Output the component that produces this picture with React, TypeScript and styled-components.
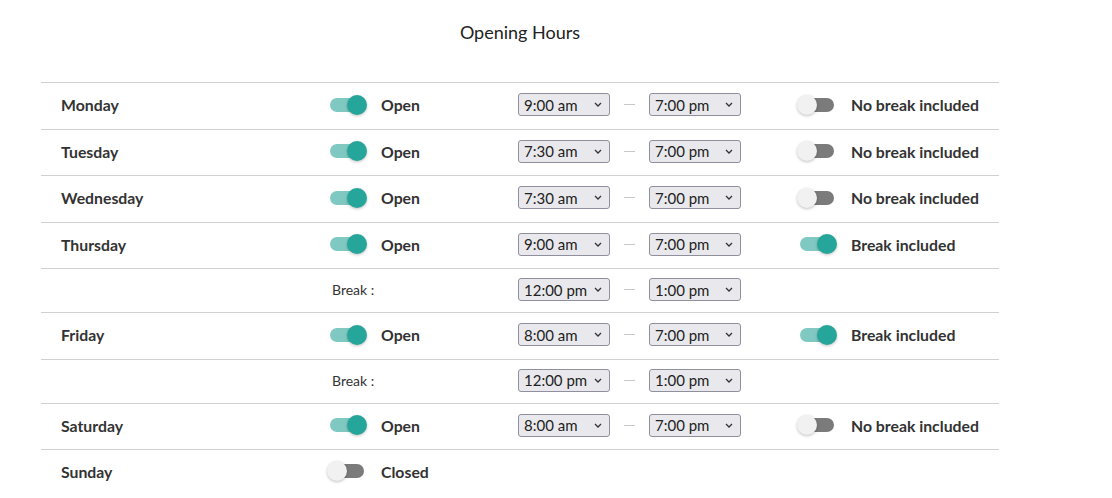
import React, { useState } from "react";
import styled, { createGlobalStyle } from "styled-components";

const GlobalStyle = createGlobalStyle`
  body {
    margin: 0;
    background: #ffffff;
    font-family: Lato, "Noto Sans", sans-serif;
    color: #333333;
  }
`;

type Day = {
  name: string;
  open: boolean;
  from?: string;
  to?: string;
  hasBreak?: boolean;
  breakFrom?: string;
  breakTo?: string;
};

const DAYS: Day[] = [
  { name: "Monday", open: true, from: "9:00 am", to: "7:00 pm", hasBreak: false },
  { name: "Tuesday", open: true, from: "7:30 am", to: "7:00 pm", hasBreak: false },
  { name: "Wednesday", open: true, from: "7:30 am", to: "7:00 pm", hasBreak: false },
  {
    name: "Thursday",
    open: true,
    from: "9:00 am",
    to: "7:00 pm",
    hasBreak: true,
    breakFrom: "12:00 pm",
    breakTo: "1:00 pm"
  },
  {
    name: "Friday",
    open: true,
    from: "8:00 am",
    to: "7:00 pm",
    hasBreak: true,
    breakFrom: "12:00 pm",
    breakTo: "1:00 pm"
  },
  { name: "Saturday", open: true, from: "8:00 am", to: "7:00 pm", hasBreak: false },
  { name: "Sunday", open: false }
];

const TIMES = [
  "7:00 am",
  "7:30 am",
  "8:00 am",
  "8:30 am",
  "9:00 am",
  "12:00 pm",
  "1:00 pm",
  "6:00 pm",
  "7:00 pm"
];

export default function App() {
  const [days, setDays] = useState<Day[]>(DAYS);

  const update = (index: number, patch: Partial<Day>) => {
    setDays(prev => prev.map((d, i) => (i === index ? { ...d, ...patch } : d)));
  };

  return (
    <>
      <GlobalStyle />
      <Page>
        <Title>Opening Hours</Title>
        <Table>
          {days.map((day, i) => (
            <React.Fragment key={day.name}>
              <Row>
                <DayName>{day.name}</DayName>
                <SwitchCell>
                  <Switch
                    checked={day.open}
                    onToggle={() => update(i, { open: !day.open })}
                  />
                  <Label>{day.open ? "Open" : "Closed"}</Label>
                </SwitchCell>
                {day.open && (
                  <>
                    <TimeSelect
                      value={day.from!}
                      onChange={v => update(i, { from: v })}
                    />
                    <DashCell>
                      <Dash />
                    </DashCell>
                    <TimeSelect
                      value={day.to!}
                      onChange={v => update(i, { to: v })}
                    />
                    <Spacer />
                    <SwitchCell>
                      <Switch
                        checked={!!day.hasBreak}
                        onToggle={() => update(i, { hasBreak: !day.hasBreak })}
                      />
                      <Label>
                        {day.hasBreak ? "Break included" : "No break included"}
                      </Label>
                    </SwitchCell>
                  </>
                )}
              </Row>
              {day.open && day.hasBreak && (
                <Row $compact>
                  <span />
                  <BreakLabel>Break :</BreakLabel>
                  <TimeSelect
                    value={day.breakFrom!}
                    onChange={v => update(i, { breakFrom: v })}
                  />
                  <DashCell>
                    <Dash />
                  </DashCell>
                  <TimeSelect
                    value={day.breakTo!}
                    onChange={v => update(i, { breakTo: v })}
                  />
                </Row>
              )}
            </React.Fragment>
          ))}
        </Table>
      </Page>
    </>
  );
}

function Switch({ checked, onToggle }: { checked: boolean; onToggle: () => void }) {
  return (
    <SwitchRoot onClick={onToggle} role="switch" aria-checked={checked}>
      <Track $on={checked} />
      <Thumb $on={checked} />
    </SwitchRoot>
  );
}

function TimeSelect({ value, onChange }: { value: string; onChange: (v: string) => void }) {
  return (
    <SelectWrap>
      <NativeSelect value={value} onChange={e => onChange(e.currentTarget.value)}>
        {TIMES.map(t => (
          <option key={t} value={t}>
            {t}
          </option>
        ))}
      </NativeSelect>
      <Chevron width="8" height="5" viewBox="0 0 8 5">
        <polyline points="1,1 4,4 7,1" fill="none" stroke="#333" strokeWidth="1.3" />
      </Chevron>
    </SelectWrap>
  );
}

const Page = styled.div`
  width: 958px;
  margin-left: 41px;
`;

const Title = styled.h1`
  margin: 21px 0 39px;
  font-size: 18px;
  line-height: 22px;
  font-weight: 400;
  color: #222222;
  text-align: center;
`;

const Table = styled.div`
  border-top: 1px solid #d0d0d0;
`;

const Row = styled.div<{ $compact?: boolean }>`
  display: grid;
  grid-template-columns: 266px 191px 92px 39px 92px 56px auto;
  align-items: center;
  height: ${p => (p.$compact ? "44px" : "46.5px")};
  padding-left: 20px;
  padding-bottom: 2px;
  box-sizing: border-box;
  border-bottom: 1px solid #d0d0d0;

  &:last-child {
    border-bottom: none;
    height: 44px;
  }
`;

const DayName = styled.span`
  font-size: 15.8px;
  font-weight: 700;
  color: #333333;
`;

const SwitchCell = styled.div`
  display: flex;
  align-items: center;
  gap: 14px;
`;

const Label = styled.span`
  font-size: 15.8px;
  font-weight: 700;
  color: #333333;
  white-space: nowrap;
`;

const BreakLabel = styled.span`
  padding-left: 5px;
  font-size: 14px;
  color: #333333;
`;

const SwitchRoot = styled.div`
  position: relative;
  width: 40px;
  height: 20px;
  flex: none;
  cursor: pointer;
`;

const Track = styled.div<{ $on: boolean }>`
  position: absolute;
  left: 3px;
  top: 3px;
  width: 34px;
  height: 14px;
  border-radius: 7px;
  background: ${p => (p.$on ? "#80c9c2" : "#7b7b7b")};
`;

const Thumb = styled.div<{ $on: boolean }>`
  position: absolute;
  top: 0;
  left: ${p => (p.$on ? "20px" : "0")};
  width: 20px;
  height: 20px;
  border-radius: 50%;
  background: ${p => (p.$on ? "#26a69a" : "#f1f1f1")};
  box-shadow: 0 1px 3px rgba(0, 0, 0, 0.25);
`;

const SelectWrap = styled.div`
  position: relative;
  width: 92px;
  height: 23px;
`;

const NativeSelect = styled.select`
  appearance: none;
  width: 100%;
  height: 100%;
  margin: 0;
  padding: 0 0 0 5px;
  border: 1px solid #8f8f9d;
  border-radius: 3px;
  background: #e9e9ed;
  font-family: Lato, "Noto Sans", sans-serif;
  font-size: 15px;
  color: #222222;
  outline: none;
`;

const Chevron = styled.svg`
  position: absolute;
  right: 8px;
  top: 9px;
  pointer-events: none;
`;

const DashCell = styled.div`
  display: flex;
  justify-content: center;
`;

const Dash = styled.span`
  width: 11px;
  height: 1px;
  background: #c8c8c8;
`;

const Spacer = styled.span``;
